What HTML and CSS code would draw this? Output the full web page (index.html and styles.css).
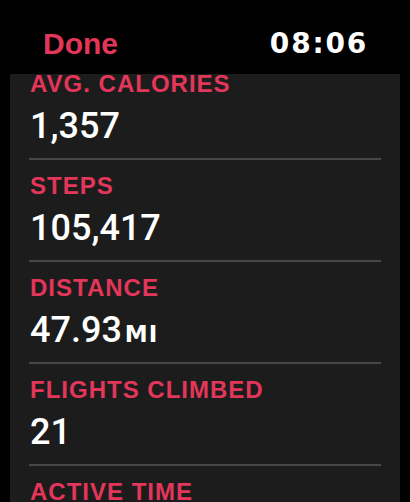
FILE: index.html
```html
<!DOCTYPE html>
<html lang="en">
<head>
<meta charset="utf-8">
<title>Summary</title>
<link rel="stylesheet" href="styles.css">
</head>
<body>
<div class="screen">
  <header class="topbar">
    <span class="done">Done</span>
    <span class="clock">08:06</span>
  </header>
  <main class="card">
    <div class="row first">
      <div class="label">AVG. CALORIES</div>
      <div class="value">1,357</div>
    </div>
    <div class="row">
      <div class="label">STEPS</div>
      <div class="value">105,417</div>
    </div>
    <div class="row">
      <div class="label">DISTANCE</div>
      <div class="value">47.93<span class="unit">MI</span></div>
    </div>
    <div class="row">
      <div class="label">FLIGHTS CLIMBED</div>
      <div class="value">21</div>
    </div>
    <div class="row last">
      <div class="label">ACTIVE TIME</div>
      <div class="value">&nbsp;</div>
    </div>
  </main>
</div>
</body>
</html>
```
FILE: styles.css
```css
html, body {
  margin: 0;
  padding: 0;
  background: #000;
}
body {
  width: 410px;
  height: 502px;
  overflow: hidden;
  font-family: "Liberation Sans", Arial, sans-serif;
}
.screen {
  display: flex;
  flex-direction: column;
  height: 502px;
}
.topbar {
  height: 74px;
  flex: none;
  display: flex;
  justify-content: space-between;
  align-items: flex-start;
  padding: 0 42px 0 43px;
  box-sizing: border-box;
}
.done {
  margin-top: 24px;
  font-family: "Liberation Sans", Arial, sans-serif;
  font-weight: bold;
  font-size: 30px;
  line-height: 40px;
  color: #e2365a;
}
.clock {
  margin-top: 24px;
  font-family: "DejaVu Sans", sans-serif;
  font-weight: bold;
  font-size: 28px;
  line-height: 40px;
  letter-spacing: 1.8px;
  color: #fff;
}
.card {
  flex: 1;
  margin: 0 10px;
  background: #1c1c1c;
  overflow: hidden;
  display: flex;
  flex-direction: column;
}
.row {
  margin: 0 19px;
  padding: 16px 0 12px 1px;
  border-bottom: 2px solid #474747;
}
.row.first {
  padding-top: 0;
}
.row.last {
  border-bottom: none;
}
.label {
  font-weight: bold;
  font-size: 24px;
  line-height: 20px;
  letter-spacing: 1px;
  color: #e2365a;
  white-space: nowrap;
}
.value {
  margin-top: 12px;
  font-family: "Roboto", "Liberation Sans", sans-serif;
  font-weight: 500;
  font-size: 36px;
  line-height: 40px;
  height: 40px;
  color: #fff;
  white-space: nowrap;
}
.unit {
  font-family: "DejaVu Sans", sans-serif;
  font-size: 23px;
  line-height: 1;
  font-weight: 700;
  margin-left: 3px;
  letter-spacing: 1px;
}
```
